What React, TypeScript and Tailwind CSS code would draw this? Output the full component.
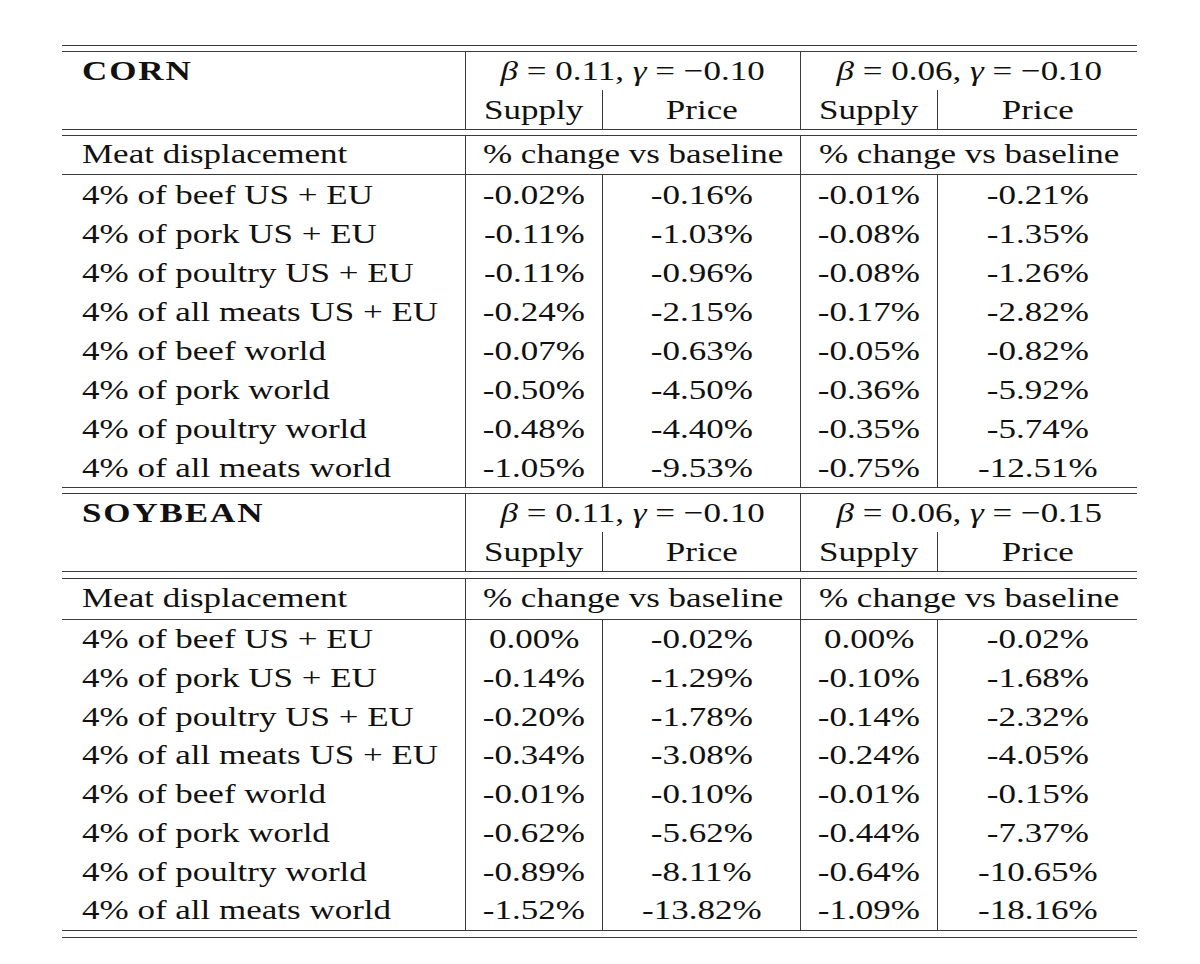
const COLS = 'grid grid-cols-[403px_137px_198px_137px_200px]';

type Row = [string, string, string, string, string];

const corn: Row[] = [
  ['4% of beef US + EU', '-0.02%', '-0.16%', '-0.01%', '-0.21%'],
  ['4% of pork US + EU', '-0.11%', '-1.03%', '-0.08%', '-1.35%'],
  ['4% of poultry US + EU', '-0.11%', '-0.96%', '-0.08%', '-1.26%'],
  ['4% of all meats US + EU', '-0.24%', '-2.15%', '-0.17%', '-2.82%'],
  ['4% of beef world', '-0.07%', '-0.63%', '-0.05%', '-0.82%'],
  ['4% of pork world', '-0.50%', '-4.50%', '-0.36%', '-5.92%'],
  ['4% of poultry world', '-0.48%', '-4.40%', '-0.35%', '-5.74%'],
  ['4% of all meats world', '-1.05%', '-9.53%', '-0.75%', '-12.51%'],
];

const soybean: Row[] = [
  ['4% of beef US + EU', '0.00%', '-0.02%', '0.00%', '-0.02%'],
  ['4% of pork US + EU', '-0.14%', '-1.29%', '-0.10%', '-1.68%'],
  ['4% of poultry US + EU', '-0.20%', '-1.78%', '-0.14%', '-2.32%'],
  ['4% of all meats US + EU', '-0.34%', '-3.08%', '-0.24%', '-4.05%'],
  ['4% of beef world', '-0.01%', '-0.10%', '-0.01%', '-0.15%'],
  ['4% of pork world', '-0.62%', '-5.62%', '-0.44%', '-7.37%'],
  ['4% of poultry world', '-0.89%', '-8.11%', '-0.64%', '-10.65%'],
  ['4% of all meats world', '-1.52%', '-13.82%', '-1.09%', '-18.16%'],
];

function T({ children, left }: { children: React.ReactNode; left?: boolean }) {
  return (
    <span className={`inline-block whitespace-nowrap scale-x-125 ${left ? 'origin-left' : ''}`}>
      {children}
    </span>
  );
}

function Params({ b, g }: { b: string; g: string }) {
  return (
    <T>
      <i>β</i> = {b}, <i>γ</i> = −{g}
    </T>
  );
}

function DoubleRule({ h = 'h-[7px]' }: { h?: string }) {
  return <div className={`${h} border-y border-[#3a3a3a]`} />;
}

function Header({ title, p1, p2 }: { title: string; p1: [string, string]; p2: [string, string] }) {
  return (
    <div className={`${COLS} grid-rows-[38px_auto]`}>
      <div className="row-span-2 pl-5 leading-[38px] font-bold">
        <span className="inline-block origin-left scale-x-125 tracking-[1.5px]">{title}</span>
      </div>
      <div className="col-span-2 border-l border-[#3a3a3a] text-center leading-[38px]">
        <Params b={p1[0]} g={p1[1]} />
      </div>
      <div className="col-span-2 border-l border-[#3a3a3a] text-center leading-[38px]">
        <Params b={p2[0]} g={p2[1]} />
      </div>
      {['Supply', 'Price', 'Supply', 'Price'].map((s, i) => (
        <div
          key={i}
          className={`text-center leading-[39px] ${i === 0 ? 'col-start-2' : ''} ${
            i % 2 === 0 ? 'border-l border-[#3a3a3a]' : 'border-l border-[#3a3a3a]'
          }`}
        >
          <T>{s}</T>
        </div>
      ))}
    </div>
  );
}

function MeatRow({ h }: { h: string }) {
  return (
    <div className={`${COLS} ${h} border-b border-[#3a3a3a]`}>
      <div className="pl-5">
        <T left>Meat displacement</T>
      </div>
      <div className="col-span-2 border-l border-[#3a3a3a] text-center">
        <T>% change vs baseline</T>
      </div>
      <div className="col-span-2 border-l border-[#3a3a3a] text-center">
        <T>% change vs baseline</T>
      </div>
    </div>
  );
}

function Body({ rows, h }: { rows: Row[]; h: string }) {
  return (
    <div>
      {rows.map((r) => (
        <div key={r[0]} className={`${COLS} ${h}`}>
          <div className="pl-5">
            <T left>{r[0]}</T>
          </div>
          {r.slice(1).map((v, i) => (
            <div key={i} className="border-l border-[#3a3a3a] text-center">
              <T>{v}</T>
            </div>
          ))}
        </div>
      ))}
    </div>
  );
}

export default function App() {
  return (
    <div className="min-h-[964px] w-[1200px] bg-white pl-[62px] pt-[45px] font-['Liberation_Serif',serif] text-[28px] text-[#111]">
      <div className="w-[1075px]">
        <DoubleRule />
        <Header title="CORN" p1={['0.11', '0.10']} p2={['0.06', '0.10']} />
        <DoubleRule />
        <MeatRow h="h-[39px] leading-[36px]" />
        <Body rows={corn} h="h-[39px] leading-[39px]" />
        <DoubleRule />
        <Header title="SOYBEAN" p1={['0.11', '0.10']} p2={['0.06', '0.15']} />
        <DoubleRule h="h-[8px]" />
        <MeatRow h="h-[41px] leading-[37px]" />
        <Body rows={soybean} h="h-[38.75px] leading-[38px]" />
        <DoubleRule h="h-[8px]" />
      </div>
    </div>
  );
}
